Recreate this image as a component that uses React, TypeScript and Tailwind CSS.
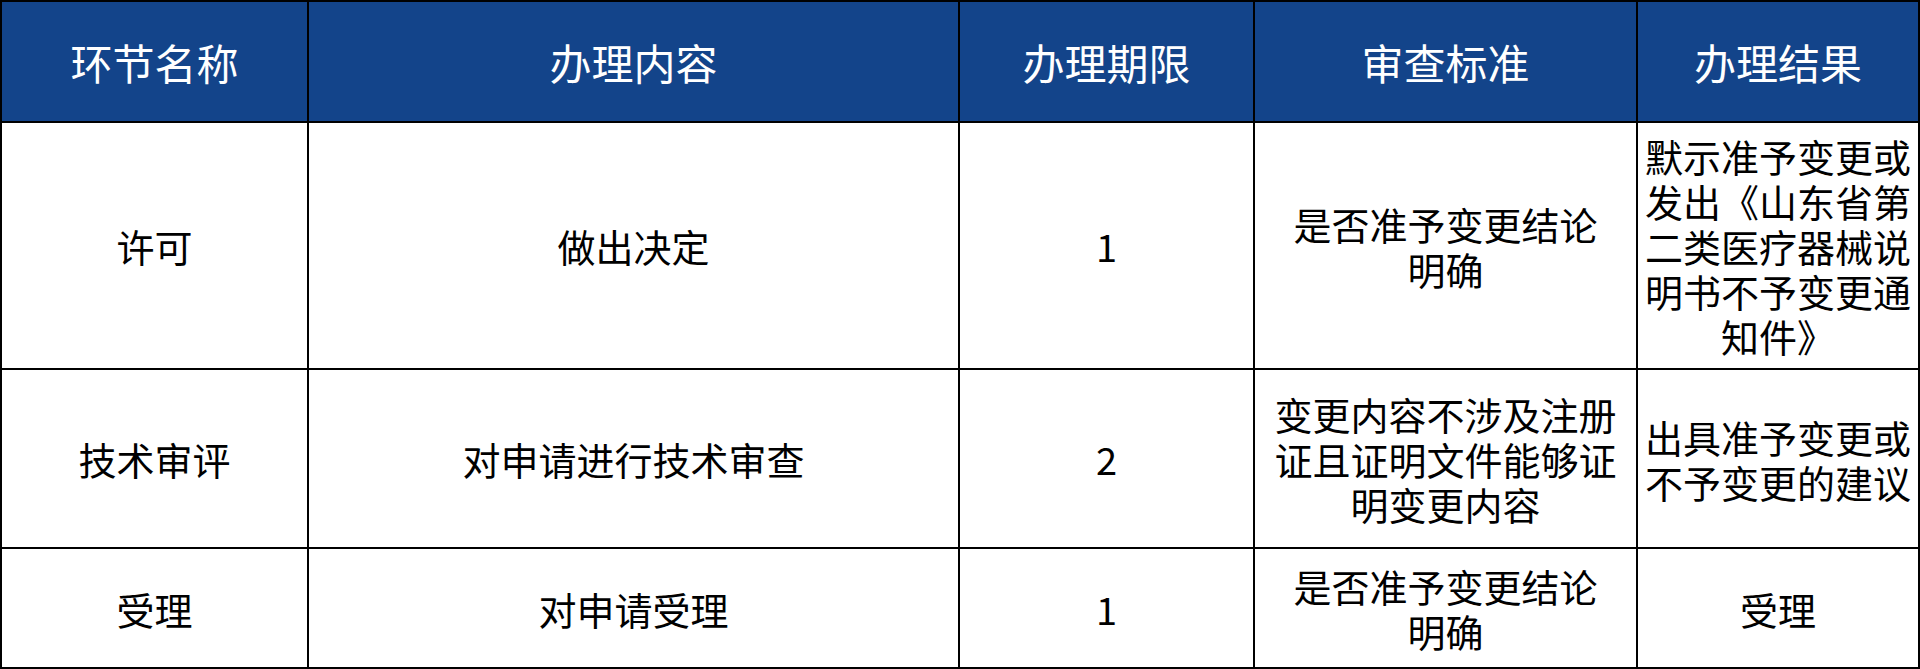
import React from "react";

const font = { fontFamily: '"Noto Sans CJK SC", "Noto Sans", sans-serif' };

type Row = { h: string; cells: string[][] };

const rows: Row[] = [
  {
    h: "h-[247px]",
    cells: [
      ["许可"],
      ["做出决定"],
      ["1"],
      ["是否准予变更结论", "明确"],
      ["默示准予变更或", "发出《山东省第", "二类医疗器械说", "明书不予变更通", "知件》"],
    ],
  },
  {
    h: "h-[179px]",
    cells: [
      ["技术审评"],
      ["对申请进行技术审查"],
      ["2"],
      ["变更内容不涉及注册", "证且证明文件能够证", "明变更内容"],
      ["出具准予变更或", "不予变更的建议"],
    ],
  },
  {
    h: "h-[120px]",
    cells: [
      ["受理"],
      ["对申请受理"],
      ["1"],
      ["是否准予变更结论", "明确"],
      ["受理"],
    ],
  },
];

const headers = ["环节名称", "办理内容", "办理期限", "审查标准", "办理结果"];

export default function App() {
  return (
    <div className="w-[1920px] h-[669px] bg-white overflow-hidden" style={font}>
      <table className="w-[1918px] table-fixed border-collapse border-2 border-black">
        <colgroup>
          <col className="w-[307px]" />
          <col className="w-[651px]" />
          <col className="w-[295px]" />
          <col className="w-[383px]" />
          <col className="w-[282px]" />
        </colgroup>
        <thead>
          <tr className="h-[121px] bg-[#13448a]">
            {headers.map((t) => (
              <th
                key={t}
                className="border-2 border-black text-white text-[42px] leading-[50px] font-normal text-center align-middle p-0"
              >
                {t}
              </th>
            ))}
          </tr>
        </thead>
        <tbody>
          {rows.map((r, i) => (
            <tr key={i} className={r.h}>
              {r.cells.map((lines, j) => (
                <td
                  key={j}
                  className="border-2 border-black text-black text-[38px] leading-[45px] text-center align-middle p-0 whitespace-nowrap"
                >
                  {lines.map((l, k) => (
                    <React.Fragment key={k}>
                      {k > 0 && <br />}
                      {l}
                    </React.Fragment>
                  ))}
                </td>
              ))}
            </tr>
          ))}
        </tbody>
      </table>
    </div>
  );
}
